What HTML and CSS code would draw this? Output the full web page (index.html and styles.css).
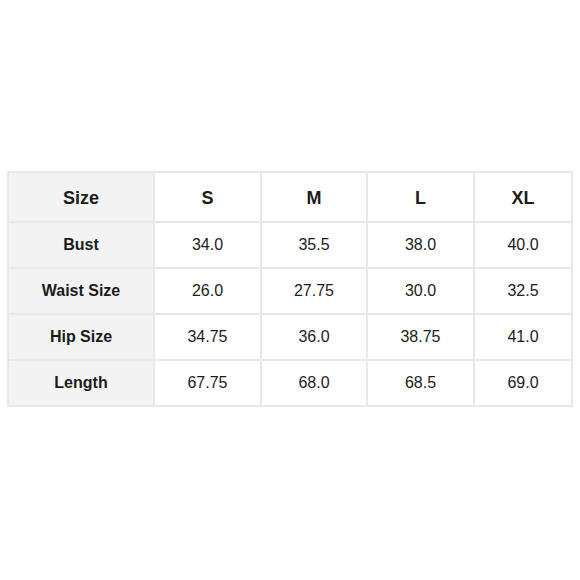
FILE: index.html
```html
<!DOCTYPE html>
<html>
<head>
<meta charset="utf-8">
<link rel="stylesheet" href="styles.css">
</head>
<body>
<div class="page">
  <table class="chart">
    <colgroup>
      <col class="c-label">
      <col class="c-s">
      <col class="c-m">
      <col class="c-l">
      <col class="c-xl">
    </colgroup>
    <thead>
      <tr class="row-head">
        <th class="label">Size</th>
        <th>S</th>
        <th>M</th>
        <th>L</th>
        <th>XL</th>
      </tr>
    </thead>
    <tbody>
      <tr>
        <th class="label">Bust</th>
        <td>34.0</td><td>35.5</td><td>38.0</td><td>40.0</td>
      </tr>
      <tr>
        <th class="label">Waist Size</th>
        <td>26.0</td><td>27.75</td><td>30.0</td><td>32.5</td>
      </tr>
      <tr>
        <th class="label">Hip Size</th>
        <td>34.75</td><td>36.0</td><td>38.75</td><td>41.0</td>
      </tr>
      <tr>
        <th class="label">Length</th>
        <td>67.75</td><td>68.0</td><td>68.5</td><td>69.0</td>
      </tr>
    </tbody>
  </table>
</div>
</body>
</html>
```

FILE: styles.css
```css
html, body {
  margin: 0;
  padding: 0;
  background: #ffffff;
}
.page {
  padding: 171px 0 0 7px;
}
.chart {
  border-collapse: collapse;
  table-layout: fixed;
  width: 564px;
  font-family: "Liberation Sans", Arial, sans-serif;
  color: #1c1c1c;
}
.c-label { width: 146px; }
.c-s { width: 107px; }
.c-m { width: 106px; }
.c-l { width: 107px; }
.c-xl { width: 98px; }
.chart th,
.chart td {
  border: 2px solid #e8e8e8;
  text-align: center;
  vertical-align: middle;
  padding: 0;
  font-size: 16px;
  height: 46px;
  box-sizing: border-box;
}
.chart th {
  font-weight: bold;
}
.chart td {
  font-weight: normal;
}
.chart .label {
  background: #f3f3f3;
}
.row-head th {
  height: 50px;
  font-size: 18px;
  padding-top: 2px;
}
```
